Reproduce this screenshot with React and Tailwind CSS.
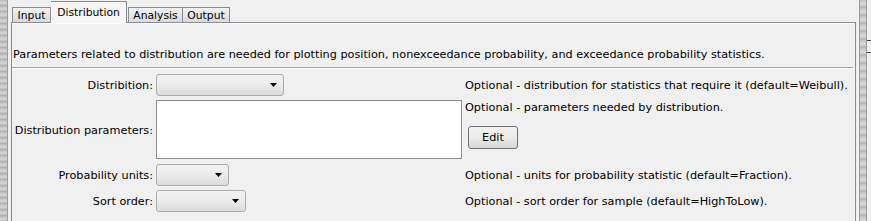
import React from "react";

function Combo({ w }) {
  return (
    <div
      className={`${w} h-[22px] rounded-[3px] border border-[#acacac] bg-gradient-to-b from-[#f2f2f2] via-[#ebebeb] to-[#dcdcdc] flex items-center justify-end pr-[6px]`}
    >
      <svg width="7" height="4" viewBox="0 0 7 4">
        <polygon points="0,0 7,0 3.5,4" fill="#000" />
      </svg>
    </div>
  );
}

export default function App() {
  return (
    <div className="w-[871px] h-[221px] bg-[#f0f0f0] flex overflow-hidden font-['DejaVu_Sans',Verdana,sans-serif] text-[11.25px] text-black leading-[14px] whitespace-nowrap">
      {/* left splitter */}
      <div className="w-[7px] h-full bg-[repeating-linear-gradient(180deg,#b8b8b8_0px,#d8d8d8_3px,#a8a8a8_6px)]" />
      <div className="w-px h-full bg-[#9a9a9a]" />
      <div className="w-[3px] h-full" />

      {/* tabbed pane */}
      <div className="w-[845px] h-full flex flex-col">
        <div className="h-[22px] flex items-end pl-px relative z-10 text-[10.75px]">
          <div className="w-[39px] h-[15px] border border-b-0 border-[#898c95] bg-gradient-to-b from-[#f2f2f2] to-[#dadada] flex items-center justify-center pt-px">
            Input
          </div>
          <div className="w-[76px] h-[22px] border-t border-r border-[#898c95] bg-[#f6f6f6] flex items-start justify-center pt-[4px] -mb-px pb-px">
            Distribution
          </div>
          <div className="w-px" />
          <div className="w-[55px] h-[15px] border border-b-0 border-[#898c95] bg-gradient-to-b from-[#f2f2f2] to-[#dadada] flex items-center justify-center pt-px">
            Analysis
          </div>
          <div className="w-[47px] h-[15px] border border-b-0 border-l-0 border-[#898c95] bg-gradient-to-b from-[#f2f2f2] to-[#dadada] flex items-center justify-center pt-px">
            Output
          </div>
        </div>

        <div className="flex-1 border-t border-l border-r border-[#898c95] flex flex-col">
          <div className="h-[44px] border-t border-white flex items-end pl-px pb-[5px]">
            Parameters related to distribution are needed for plotting position, nonexceedance probability, and exceedance probability statistics.
          </div>
          <div className="mr-[2px] border-t border-[#a0a0a0]" />
          <div className="mr-[2px] border-t border-white" />

          <div className="pt-[5px] grid grid-cols-[141px_306px_1fr] gap-x-[3px]">
            {/* row 1 */}
            <div className="h-[22px] flex items-center justify-end pt-[1px]">Distribition:</div>
            <div className="h-[22px] flex items-center">
              <Combo w="w-[128px]" />
            </div>
            <div className="h-[22px] flex items-center pt-[2px]">
              Optional - distribution for statistics that require it (default=Weibull).
            </div>

            {/* row 2 */}
            <div className="mt-[4px] h-[59px] flex items-center justify-end pt-[3px]">
              Distribution parameters:
            </div>
            <div className="mt-[4px] h-[59px] border border-[#8f8f8f] bg-white" />
            <div className="mt-[2px] flex flex-col items-start">
              <div className="h-[14px] mt-[3px]">Optional - parameters needed by distribution.</div>
              <div className="mt-[11px] ml-[3px] w-[50px] h-[23px] rounded-[3px] border border-[#707070] bg-gradient-to-b from-[#f2f2f2] via-[#ebebeb] to-[#d8d8d8] flex items-center justify-center">
                Edit
              </div>
            </div>

            {/* row 3 */}
            <div className="mt-[5px] h-[22px] flex items-center justify-end pt-[1px]">Probability units:</div>
            <div className="mt-[5px] h-[22px] flex items-center">
              <Combo w="w-[73px]" />
            </div>
            <div className="mt-[5px] h-[22px] flex items-center pt-[2px]">
              Optional - units for probability statistic (default=Fraction).
            </div>

            {/* row 4 */}
            <div className="mt-[4px] h-[22px] flex items-center justify-end pt-[1px]">Sort order:</div>
            <div className="mt-[4px] h-[22px] flex items-center">
              <Combo w="w-[90px]" />
            </div>
            <div className="mt-[4px] h-[22px] flex items-center pt-[2px]">
              Optional - sort order for sample (default=HighToLow).
            </div>
          </div>
        </div>
      </div>

      {/* right side */}
      <div className="w-[3px] h-full" />
      <div className="w-px h-full bg-[#9a9a9a]" />
      <div className="w-[6px] h-full bg-[repeating-linear-gradient(180deg,#c0c0c0_0px,#d8d8d8_4px,#b0b0b0_8px)]" />
      <div className="w-px h-full bg-[#9a9a9a]" />
      <div className="flex-1 h-full flex flex-col">
        <div className="h-[40px]" />
        <div className="h-px bg-[#404040]" />
        <div className="h-[11px]" />
        <div className="h-px bg-[#404040]" />
      </div>
    </div>
  );
}
